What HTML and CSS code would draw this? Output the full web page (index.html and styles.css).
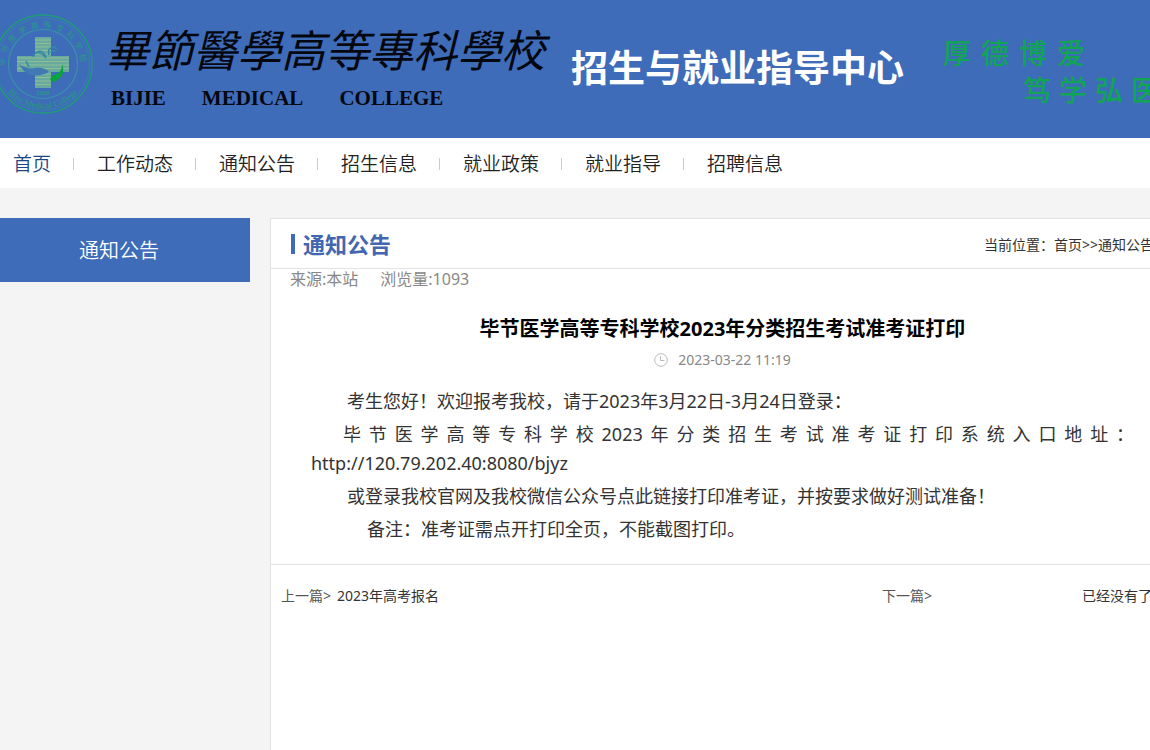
FILE: index.html
```html
<!DOCTYPE html>
<html lang="zh-CN">
<head>
    <meta charset="UTF-8">
    <meta name="viewport" content="width=device-width, initial-scale=1.0">
    <title>毕节医学高等专科学校招生与就业指导中心</title>
    <link rel="stylesheet" href="styles.css">
</head>
<body>
    <header class="header">
        <svg class="logo" viewBox="0 0 100 100" aria-hidden="true">
            <defs>
                <path id="arcTop" d="M12.500 58A38 38 0 1 1 87.500 58"/>
                <path id="arcBottom" d="M7 63A45 45 0 0 0 93 63"/>
            </defs>
            <circle cx="50" cy="50" r="49" fill="none" stroke="#1f9b78" stroke-width="1.400"/>
            <circle cx="50" cy="50" r="46.500" fill="none" stroke="#2c8f9b" stroke-width="0.700"/>
            <circle cx="50" cy="50" r="34.500" fill="none" stroke="#3795a5" stroke-width="1.100"/>
            <path d="M42 23H58V42H76V58H58V74H42V58H24V42H42Z" fill="#69aaa0"/>
            <path d="M42 26H58M42 29.500H58M42 33H58M42 36.500H58M42 40H58M24 44H76M24 47.500H76M24 51H76M24 54.500H76M42 60H58M42 63.500H58M42 67H58M42 70.500H58" stroke="#8fbd91" stroke-width="1.200"/>
            <path d="M25 50C32 53 34 55 42 54C48 53 54 55 56 58C51 61 44 62 38 61C32 60 30 55 25 50Z" fill="#4179b4"/>
            <path d="M36 53L33 47M40 43C42 36 48 38 53 44M43 39C48 35 52 39 53 44M56 41C54 34 60 31 64 35M58 39C58 36 61 36 63 38" fill="none" stroke="#318aa7" stroke-width="1.500"/>
            <path d="M69 50C72 57 70 64 61 68C56 67 56 64 61 61C66 59 69 57 69 50Z" fill="#08a43d"/>
            <text class="logo-cn"><textPath href="#arcTop" startOffset="50%">毕节医学高等专科学校</textPath></text>
            <text class="logo-year" x="50" y="81">1938</text>
            <text class="logo-en"><textPath href="#arcBottom" startOffset="50%">Bijie Medical College</textPath></text>
        </svg>
        <div class="school">
            <div class="school-cn">畢節醫學高等專科學校</div>
            <div class="school-en"><span>BIJIE</span><span>MEDICAL</span><span>COLLEGE</span></div>
        </div>
        <h1 class="site-name">招生与就业指导中心</h1>
        <div class="motto">
            <div class="motto-row"><span>厚</span><span>德</span><span>博</span><span>爱</span></div>
            <div class="motto-row second"><span>笃</span><span>学</span><span>弘</span><span>医</span></div>
        </div>
    </header>

    <nav class="nav">
        <a class="active" href="#">首页</a>
        <a href="#">工作动态</a>
        <a href="#">通知公告</a>
        <a href="#">招生信息</a>
        <a href="#">就业政策</a>
        <a href="#">就业指导</a>
        <a href="#">招聘信息</a>
    </nav>

    <div class="content">
        <aside class="sidebar">
            <h2>通知公告</h2>
        </aside>
        <main class="panel">
            <div class="panel-head">
                <h2>通知公告</h2>
                <div class="position">当前位置：<a href="#">首页</a>&gt;&gt;<a href="#">通知公告</a></div>
            </div>
            <div class="source"><span>来源:本站</span><span>浏览量:1093</span></div>
            <article class="article">
                <h3>毕节医学高等专科学校2023年分类招生考试准考证打印</h3>
                <div class="date">
                    <svg viewBox="0 0 14 14" aria-hidden="true">
                        <circle cx="7" cy="7" r="6.300"/>
                        <path d="M6.500 3V7.500H10.500"/>
                    </svg>
                    <span>2023-03-22 11:19</span>
                </div>
                <div class="text">
                    <p>考生您好！欢迎报考我校，请于2023年3月22日-3月24日登录：</p>
                    <p class="address">毕节医学高等专科学校2023年分类招生考试准考证打印系统入口地址：<a href="http://120.79.202.40:8080/bjyz">http://120.79.202.40:8080/bjyz</a></p>
                    <p>或登录我校官网及我校微信公众号点此链接打印准考证，并按要求做好测试准备！</p>
                    <p class="remark">备注：准考证需点开打印全页，不能截图打印。</p>
                </div>
            </article>
            <div class="pager">
                <div class="prev"><span>上一篇&gt;</span><a href="#">2023年高考报名</a></div>
                <div class="next"><span>下一篇&gt;</span><span class="none">已经没有了</span></div>
            </div>
        </main>
    </div>
</body>
</html>
```

FILE: styles.css
```css
* {
    margin: 0;
    padding: 0;
    box-sizing: border-box;
}
body {
    font-family: "Noto Sans", "Noto Sans CJK SC", sans-serif;
    font-size: 14px;
    color: #333;
    background: #f4f4f4;
    min-height: 100vh;
    display: flex;
    flex-direction: column;
    overflow: hidden;
}
a {
    color: inherit;
    text-decoration: none;
}

/* header */
.header {
    display: flex;
    align-items: flex-start;
    height: 138px;
    background: #3e6cb9;
    white-space: nowrap;
    overflow: hidden;
}
.logo {
    flex: none;
    width: 100px;
    height: 100px;
    margin: 14px 12px 0 -7px;
}
.logo text {
    fill: #269a87;
    text-anchor: middle;
}
.logo .logo-cn {
    font-family: "Noto Sans CJK SC", sans-serif;
    font-size: 8px;
    letter-spacing: 4px;
}
.logo .logo-year {
    font-family: "Liberation Sans", sans-serif;
    font-size: 6px;
    font-weight: bold;
}
.logo .logo-en {
    font-family: "Liberation Serif", serif;
    font-size: 9px;
}
.school {
    flex: none;
    width: 466px;
    padding-top: 20px;
    color: #05070f;
}
.school-cn {
    font-family: "Noto Sans CJK TC", sans-serif;
    font-size: 44px;
    font-style: italic;
    line-height: 56px;
}
.school-en {
    display: flex;
    gap: 36px;
    padding: 10px 0 0 6px;
    font-family: "Liberation Serif", serif;
    font-size: 21px;
    font-weight: bold;
    line-height: 24px;
}
.site-name {
    flex: none;
    width: 372px;
    padding-top: 42px;
    font-size: 37px;
    line-height: 52px;
    color: #fff;
}
.motto {
    flex: none;
    padding-top: 34px;
    font-family: "Noto Sans CJK SC", sans-serif;
    font-size: 28px;
    font-weight: 500;
    line-height: 37px;
    color: #12a455;
}
.motto-row {
    display: flex;
    gap: 10px;
}
.motto-row.second {
    gap: 8px;
    padding-left: 80px;
}

/* nav */
.nav {
    display: flex;
    align-items: center;
    height: 50px;
    padding-left: 13px;
    background: #fff;
    font-size: 19px;
    font-weight: 350;
    color: #222;
}
.nav a {
    display: flex;
    align-items: center;
    white-space: nowrap;
}
.nav a + a::before {
    content: "";
    width: 1px;
    height: 12px;
    margin: 2px 23px 0 22px;
    background: #ccc;
}
.nav .active {
    color: #1c4786;
}

/* content */
.content {
    flex: 1;
    display: flex;
    gap: 20px;
    margin-right: -25px;
    padding-top: 30px;
}
.sidebar {
    flex: none;
    width: 250px;
}
.sidebar h2 {
    padding: 2px 12px 0 0;
    background: #3e6cb9;
    color: #fff;
    font-size: 20px;
    font-weight: 350;
    line-height: 62px;
    text-align: center;
}
.panel {
    flex: 1;
    background: #fff;
    border: 1px solid #e2e2e2;
    border-bottom: none;
}
.panel-head {
    display: flex;
    align-items: center;
    justify-content: space-between;
    height: 50px;
    padding: 0 20px;
    border-bottom: 1px solid #e2e2e2;
}
.panel-head h2 {
    display: flex;
    align-items: center;
    gap: 8px;
    font-size: 22px;
    line-height: 30px;
    color: #4267b0;
}
.panel-head h2::before {
    content: "";
    width: 4px;
    height: 20px;
    background: #3e6cb9;
}
.source {
    display: flex;
    gap: 22px;
    padding-left: 19px;
    font-size: 16px;
    line-height: 20px;
    color: #888;
}
.article {
    padding: 25px 40px 16px;
    border-bottom: 1px solid #e2e2e2;
}
.article h3 {
    font-size: 20px;
    line-height: 30px;
    color: #000;
    text-align: center;
}
.date {
    display: flex;
    align-items: center;
    justify-content: center;
    gap: 10px;
    margin-top: 5px;
    line-height: 22px;
    color: #888;
}
.date svg {
    width: 14px;
    height: 14px;
    fill: none;
    stroke: #bbb;
}
.text {
    margin-top: 16px;
    font-size: 18px;
    line-height: 29px;
}
.text p {
    margin-bottom: 4px;
    text-align: justify;
    text-indent: 36px;
}
.text .address {
    text-indent: 32px;
}
.text .address a {
    white-space: nowrap;
}
.text .remark {
    text-indent: 56px;
}
.pager {
    display: flex;
    justify-content: space-between;
    padding: 20px 22px 20px 10px;
    line-height: 22px;
}
.pager span {
    color: #555;
}
.prev {
    display: flex;
    gap: 6px;
}
.next {
    display: flex;
    justify-content: space-between;
    width: 31%;
}
.pager .none {
    color: #333;
}
```
